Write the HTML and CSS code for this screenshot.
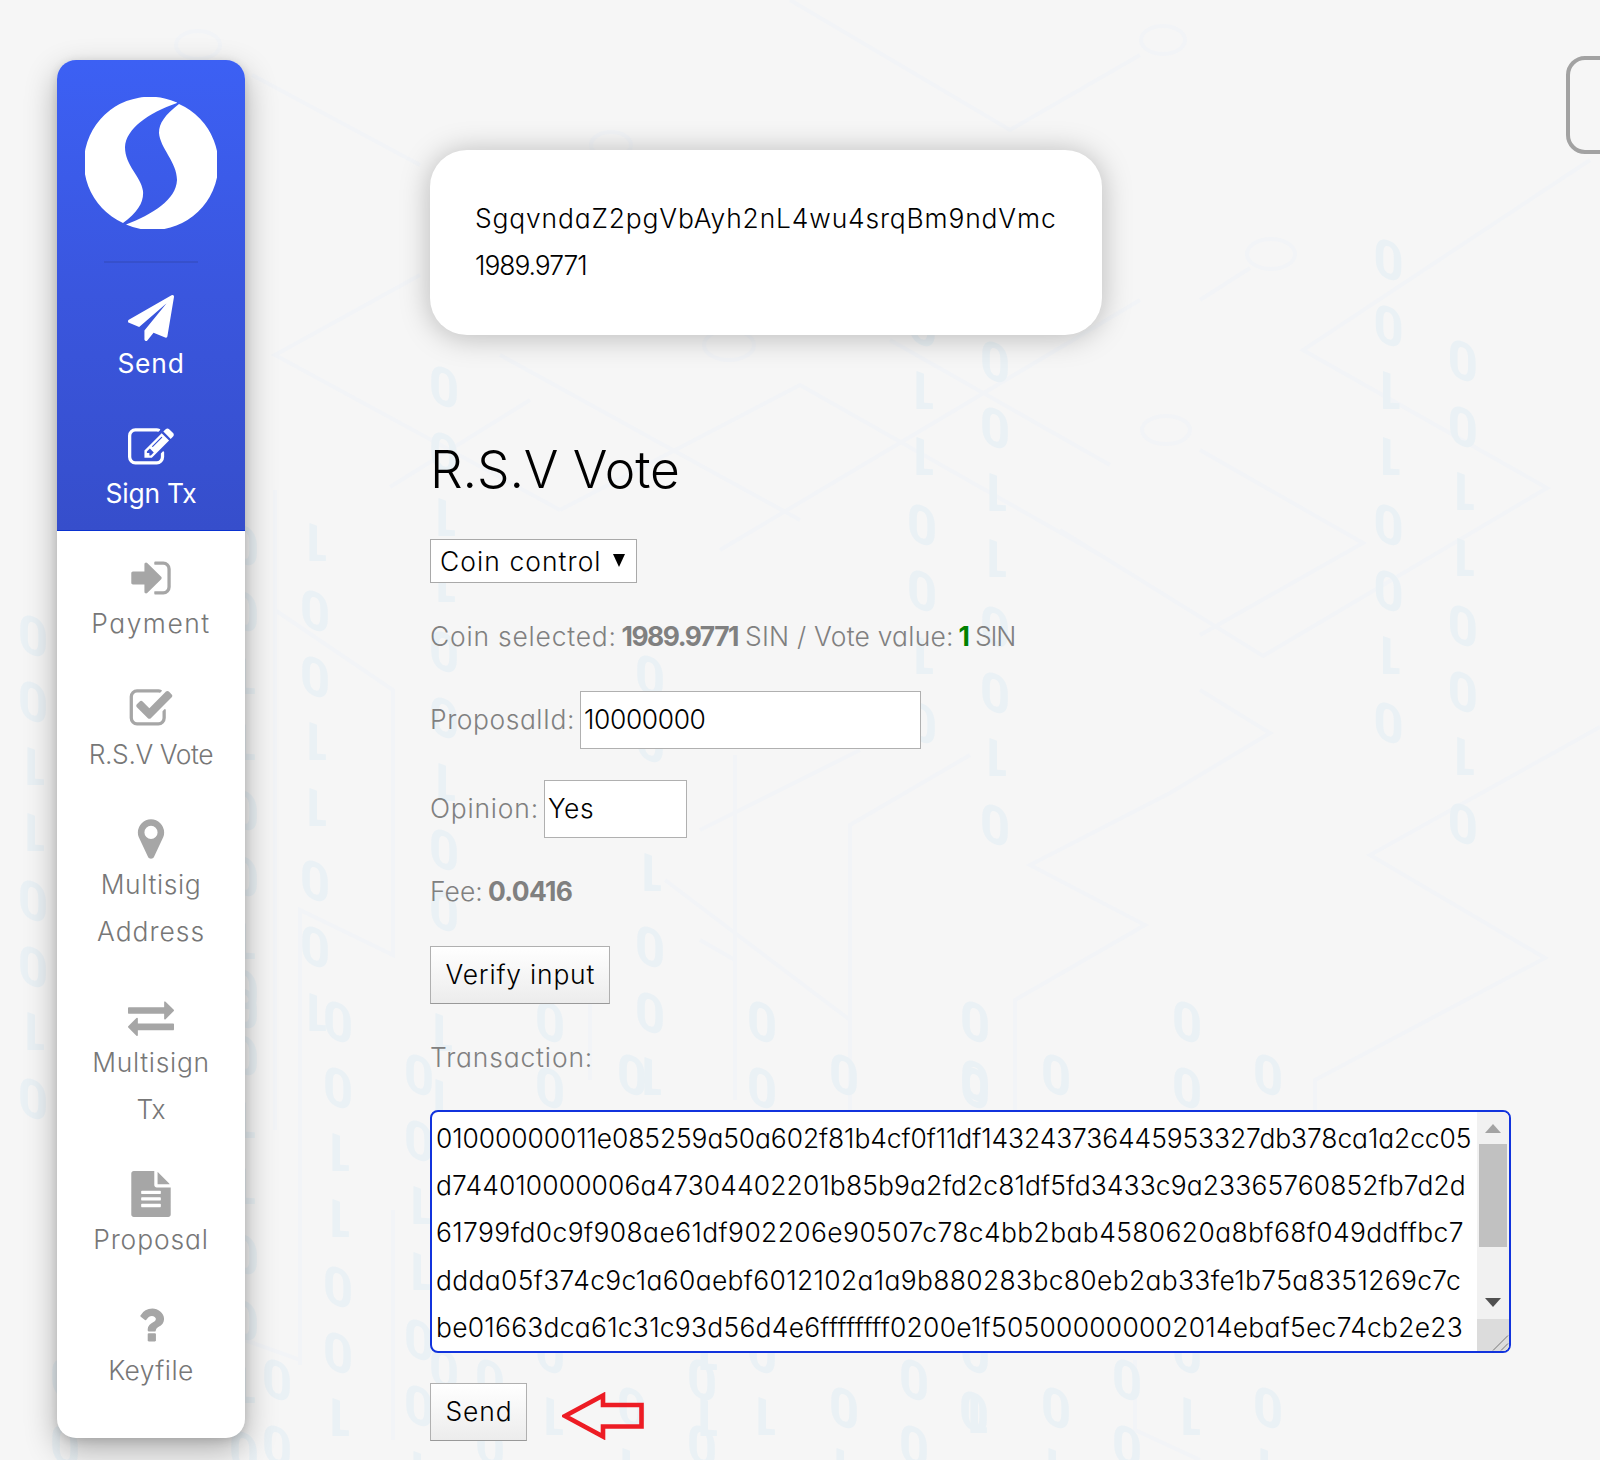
FILE: index.html
```html
<!DOCTYPE html>
<html lang="en">
<head>
<meta charset="utf-8">
<title>R.S.V Vote</title>
<link rel="stylesheet" href="styles.css">
</head>
<body>
<svg class="backdrop" viewBox="0 0 1600 1460" aria-hidden="true">
  <defs>
    <text id="d0" class="digit" text-anchor="middle" transform="skewY(20) rotate(180)" y="18">0</text>
    <text id="d1" class="digit" text-anchor="middle" transform="skewY(20) rotate(180)" y="18">1</text>
    <g id="pair"><use href="#d0"/><use href="#d0" y="66"/></g>
    <g id="ones"><use href="#d1"/><use href="#d1" y="66"/></g>
    <g id="col">
      <use href="#pair"/><use href="#ones" y="132"/><use href="#pair" y="265"/><use href="#d1" y="397"/><use href="#d0" y="463"/>
    </g>
  </defs>
  <g class="circuit">
    <path d="M1590 160 1303 350 1547 488 1263 656 1060 530M1200 300 1250 268M1200 450 1363 543 1200 635M1200 690 1270 733 1170 793 1030 865 1145 925 1015 1000V1180M1600 727 1370 855 1545 958 1315 1080V1110M790 0 1010 130 1140 55M252 75 420 165M420 275 275 355 560 510M560 510 800 385 1100 555M500 355 800 520M890 340 1110 465M1140 300 720 550M390 487 530 400M700 830 860 750M850 1180V825L970 755M735 1100V755M665 880 850 1020M590 1080V950M700 940 735 960M275 490V1130M275 610 393 690V955L300 910V1365M245 1340 300 1360V1100M393 1210V1440M1135 1360V1430L1200 1460"/>
    <ellipse cx="1271" cy="254" rx="24" ry="15"/><ellipse cx="1163" cy="40" rx="22" ry="14"/><ellipse cx="1166" cy="430" rx="24" ry="14"/><ellipse cx="729" cy="345" rx="25" ry="15"/><ellipse cx="611" cy="145" rx="20" ry="13"/><ellipse cx="198" cy="45" rx="22" ry="14"/>
  </g>
  <g class="digits">
    <use href="#col" x="1388.5" y="259"/><use href="#col" x="1462.7" y="360"/>
    <use href="#col" x="33" y="635"/><use href="#col" x="995" y="361"/>
    <use href="#col" x="922" y="259"/><use href="#col" x="444" y="386"/>
    <use href="#d1" x="315" y="543"/><use href="#pair" x="315" y="610"/><use href="#ones" x="315" y="742"/><use href="#pair" x="315" y="880"/><use href="#d1" x="315" y="1013"/>
    <use href="#col" x="338" y="1021"/>
    <use href="#col" x="244" y="544"/><use href="#col" x="244" y="988"/>
    <use href="#col" x="419" y="1074"/>
    <use href="#pair" x="277" y="1379"/><use href="#pair" x="65" y="1379"/>
    <use href="#d0" x="444" y="910"/><use href="#ones" x="441" y="1033"/>
    <use href="#pair" x="650" y="675"/><use href="#ones" x="650" y="807"/><use href="#pair" x="650" y="946"/><use href="#d1" x="650" y="1077"/>
    <use href="#pair" x="550" y="1021"/><use href="#d0" x="632" y="1074"/>
    <use href="#pair" x="762" y="1021"/><use href="#d0" x="844" y="1074"/>
    <use href="#pair" x="975" y="1021"/><use href="#d0" x="975" y="1080"/><use href="#d0" x="1056" y="1074"/>
    <use href="#pair" x="1187" y="1021"/><use href="#d0" x="1268" y="1074"/>
    <use href="#d0" x="444" y="1368"/><use href="#pair" x="490" y="1379"/><use href="#d0" x="550" y="1352"/><use href="#d1" x="552" y="1417"/>
    <use href="#d0" x="632" y="1407"/><use href="#pair" x="702" y="1379"/><use href="#ones" x="706" y="1352"/>
    <use href="#d0" x="762" y="1352"/><use href="#d1" x="764" y="1417"/><use href="#d0" x="844" y="1407"/><use href="#pair" x="914" y="1379"/>
    <use href="#d0" x="975" y="1352"/><use href="#d0" x="974" y="1411"/><use href="#d1" x="976" y="1415"/>
    <use href="#d0" x="1056" y="1407"/><use href="#pair" x="1127" y="1379"/><use href="#d0" x="1187" y="1352"/><use href="#d1" x="1189" y="1417"/><use href="#d0" x="1268" y="1407"/>
    <use href="#d1" x="628" y="1468"/><use href="#d1" x="842" y="1468"/><use href="#d1" x="1054" y="1468"/><use href="#d1" x="1266" y="1468"/>
  </g>
</svg>

<aside class="sidebar">
  <div class="brand">
    <svg class="logo" viewBox="0 0 132 132"><path d="M92 5.500A65.500 65.500 0 0 0 38 126C53 115 59 105 58 94C56 79 40 69 40 50C41 32 63 16 92 6zM94 7C80 18 74 26 74 36C75 51 92 65 92 83C91 103 68 117 41 127.500A65.500 65.500 0 0 0 94 7z"/></svg>
    <hr class="rule">
    <a class="item"><svg class="icon" viewBox="0 0 1792 1792"><path d="M1764 11q33 24 27 64l-256 1536q-5 29-32 45-14 8-31 8-11 0-24-5l-453-185-242 295q-18 23-49 23-13 0-22-4-19-7-30.500-23.500t-11.500-36.500v-349l864-1059-1069 925-395-162q-37-14-40-55-2-40 32-59l1664-960q15-9 32-9 20 0 36 11z"/></svg><span class="t-send">Send</span></a>
    <a class="item"><svg class="icon" viewBox="0 0 1792 1792"><path d="M888 1184l116-116-152-152-116 116v56h96v96h56zm440-720q-16-16-33 1l-350 350q-17 17-1 33t33-1l350-350q17-17 1-33zm80 594v190q0 119-84.500 203.500t-203.500 84.500h-832q-119 0-203.500-84.500t-84.500-203.500v-832q0-119 84.500-203.500t203.500-84.500h832q63 0 117 25 15 7 18 23 3 17-9 29l-49 49q-14 14-32 8-23-6-45-6h-832q-66 0-113 47t-47 113v832q0 66 47 113t113 47h832q66 0 113-47t47-113v-126q0-13 9-22l64-64q15-15 35-7t20 29zm-96-738l288 288-672 672h-288v-288zm444 132l-92 92-288-288 92-92q28-28 68-28t68 28l152 152q28 28 28 68t-28 68z"/></svg><span class="t-sign">Sign Tx</span></a>
  </div>
  <nav class="nav">
    <a class="item"><svg class="icon" viewBox="0 0 1792 1792"><path d="M1312 896q0 26-19 45l-544 544q-19 19-45 19t-45-19-19-45v-288h-448q-26 0-45-19t-19-45v-384q0-26 19-45t45-19h448v-288q0-26 19-45t45-19 45 19l544 544q19 19 19 45zm352-352v704q0 119-84.500 203.500t-203.500 84.500h-320q-13 0-22.500-9.500t-9.500-22.500q0-4-1-20t-.5-26.500 3-23.500 10-19.500 20.500-6.500h320q66 0 113-47t47-113v-704q0-66-47-113t-113-47h-312l-11.500-1-11.500-3-8-5.500-7-9-2-13.500q0-4-1-20t-.5-26.500 3-23.500 10-19.500 20.500-6.500h320q119 0 203.500 84.500t84.500 203.500z"/></svg><span class="t-pay">Payment</span></a>
    <a class="item"><svg class="icon" viewBox="0 0 1792 1792"><path d="M1472 930v318q0 119-84.500 203.500t-203.500 84.500h-832q-119 0-203.500-84.500t-84.500-203.500v-832q0-119 84.500-203.500t203.500-84.500h832q63 0 117 25 15 7 18 23 3 17-9 29l-49 49q-10 10-23 10-3 0-9-2-23-6-45-6h-832q-66 0-113 47t-47 113v832q0 66 47 113t113 47h832q66 0 113-47t47-113v-254q0-13 9-22l64-64q10-10 23-10 6 0 12 3 20 8 20 29zm231-489l-814 814q-24 24-57 24t-57-24l-430-430q-24-24-24-57t24-57l110-110q24-24 57-24t57 24l263 263 647-647q24-24 57-24t57 24l110 110q24 24 24 57t-24 57z"/></svg><span class="t-vote">R.S.V Vote</span></a>
    <a class="item"><svg class="icon" viewBox="0 0 1792 1792"><path d="M1152 640q0-106-75-181t-181-75-181 75-75 181 75 181 181 75 181-75 75-181zm256 0q0 109-33 179l-364 774q-16 33-47.500 52t-67.500 19-67.500-19-46.500-52l-365-774q-33-70-33-179 0-212 150-362t362-150 362 150 150 362z"/></svg><span class="t-msig">Multisig</span><span class="t-addr">Address</span></a>
    <a class="item"><svg class="icon" viewBox="0 0 1792 1792"><path d="M1792 1184v192q0 13-9.500 22.500t-22.500 9.500h-1376v192q0 13-9.500 22.500t-22.500 9.500q-12 0-24-10l-319-320q-9-9-9-22 0-14 9-23l320-320q9-9 23-9 13 0 22.500 9.500t9.500 22.500v192h1376q13 0 22.500 9.500t9.500 22.500zm0-544q0 14-9 23l-320 320q-9 9-23 9-13 0-22.500-9.500t-9.500-22.500v-192h-1376q-13 0-22.500-9.500t-9.500-22.500v-192q0-13 9.500-22.500t22.500-9.500h1376v-192q0-14 9-23t23-9q12 0 24 10l319 319q9 9 9 23z"/></svg><span class="t-msign">Multisign</span><span class="t-tx">Tx</span></a>
    <a class="item"><svg class="icon" viewBox="0 0 1792 1792"><path d="M1596 476q14 14 28 36h-472v-472q22 14 36 28zm-476 164h544v1056q0 40-28 68t-68 28h-1344q-40 0-68-28t-28-68v-1600q0-40 28-68t68-28h800v544q0 40 28 68t68 28zm160 736v-64q0-14-9-23t-23-9h-704q-14 0-23 9t-9 23v64q0 14 9 23t23 9h704q14 0 23-9t9-23zm0-256v-64q0-14-9-23t-23-9h-704q-14 0-23 9t-9 23v64q0 14 9 23t23 9h704q14 0 23-9t9-23zm0-256v-64q0-14-9-23t-23-9h-704q-14 0-23 9t-9 23v64q0 14 9 23t23 9h704q14 0 23-9t9-23z"/></svg><span class="t-prop">Proposal</span></a>
    <a class="item"><svg class="icon" viewBox="0 0 1792 1792"><path d="M1088 1256v240q0 16-12 28t-28 12h-240q-16 0-28-12t-12-28v-240q0-16 12-28t28-12h240q16 0 28 12t12 28zm316-600q0 54-15.500 101t-35 76.500-55 59.500-57.500 43.500-61 35.500q-41 23-68.500 65t-27.500 67q0 17-12 32.500t-28 15.500h-240q-15 0-25.500-18.500t-10.500-37.500v-45q0-83 65-156.500t143-108.500q59-27 84-56t25-76q0-42-46.500-74t-107.500-32q-65 0-108 29-35 25-107 115-13 16-31 16-12 0-25-8l-164-125q-13-10-15.500-25t5.500-28q160-266 464-266 80 0 161 31t146 83 106 127.500 41 158.500z"/></svg><span class="t-key">Keyfile</span></a>
  </nav>
</aside>

<main class="main">
  <section class="wallet">
    <div class="t-wallet">SgqvndaZ2pgVbAyh2nL4wu4srqBm9ndVmc</div>
    <div class="t-balance">1989.9771</div>
  </section>
  <h1 class="title">R.S.V Vote</h1>
  <div class="select"><span class="t-coin">Coin control</span><svg class="caret" viewBox="0 0 12 13"><path d="M0 0H12L6 13z"/></svg></div>
  <p class="line"><span class="t-selected">Coin selected:</span><b class="amount">1989.9771</b><span class="t-value">SIN / Vote value:</span><b class="vote">1</b><span class="t-sin">SIN</span></p>
  <div class="field proposal"><span class="t-pid">ProposalId:</span><div class="input t-id">10000000</div></div>
  <div class="field opinion"><span class="t-opinion">Opinion:</span><div class="input t-yes">Yes</div></div>
  <p class="line"><span class="t-fee">Fee:</span><b class="fee">0.0416</b></p>
  <button class="button verify">Verify input</button>
  <p class="line"><span class="t-trans">Transaction:</span></p>
  <div class="textarea">
    <div class="hex">
      <div class="h1">01000000011e085259a50a602f81b4cf0f11df143243736445953327db378ca1a2cc05</div>
      <div class="h2">d744010000006a47304402201b85b9a2fd2c81df5fd3433c9a23365760852fb7d2d</div>
      <div class="h3">61799fd0c9f908ae61df902206e90507c78c4bb2bab4580620a8bf68f049ddffbc7</div>
      <div class="h4">ddda05f374c9c1a60aebf6012102a1a9b880283bc80eb2ab33fe1b75a8351269c7c</div>
      <div class="h5">be01663dca61c31c93d56d4e6ffffffff0200e1f505000000002014ebaf5ec74cb2e23</div>
    </div>
    <div class="scroll">
      <svg class="up" viewBox="0 0 16 9"><path d="M0 9 8 0 16 9z"/></svg>
      <div class="thumb"></div>
      <svg class="down" viewBox="0 0 16 9"><path d="M0 0H16L8 9z"/></svg>
      <svg class="grip" viewBox="0 0 32 32"><path d="M16 31 31 16M24 31 31 24"/></svg>
    </div>
  </div>
  <div class="actions">
    <button class="button send">Send</button>
    <svg class="arrow" viewBox="0 0 82 48"><path d="M3 24 41 3.500V13H79.500V34.500H41V44.500z"/></svg>
  </div>
</main>
<div class="panel"></div>
</body>
</html>
```
FILE: styles.css
```css
* { box-sizing: border-box; }
body {
  margin: 0; width: 1600px; height: 1460px; overflow: hidden; position: relative;
  display: flex; align-items: flex-start; background: #f6f6f6; color: #000;
  font: 340 26.4px/47.2px Inter, "Open Sans", sans-serif;
  font-feature-settings: "cv11"; white-space: nowrap;
}
svg { display: block; }
p, h1 { margin: 0; }
b { font-weight: 700; }

.backdrop { position: absolute; left: 0; top: 0; width: 1600px; height: 1460px; z-index: -1; }
.digit { font: bold 53px Roboto, sans-serif; }
.digits { fill: #eaf1f5; }
.circuit { fill: none; stroke: #f2f4f7; stroke-width: 4; }

.sidebar {
  width: 188px; height: 1378px; margin: 60px 0 0 57px; border-radius: 19px; overflow: hidden;
  background: #fff; color: #777; text-align: center;
  box-shadow: 0 12px 32px rgba(0,0,0,.3), 0 2px 10px rgba(0,0,0,.12);
}
.brand {
  height: 471px; padding-top: 37px; color: #fff; font-weight: 430;
  background: linear-gradient(#3c60f4, #3a56de 50%, #364ecb); border-bottom: 1px solid #0a32d0;
}
.logo { width: 132px; height: 132px; margin: 0 auto; fill: #fff; }
.rule { width: 94px; height: 2px; margin: 31.500px auto 32px; border: 0; background: #3650cc; }
.item { display: flex; flex-direction: column; align-items: center; margin-bottom: 38.200px; }
.icon { width: 46px; height: 46px; fill: currentColor; margin-bottom: -1px; }
.nav { padding-top: 24.300px; }
.nav .icon { fill: #a6a6a6; }

.main { margin: 150px 0 0 185px; width: 1081px; color: #808080; display: flex; flex-direction: column; align-items: flex-start; }
.wallet {
  width: 672px; height: 185px; padding: 45px 0 0 45px; border-radius: 37px; background: #fff; color: #000;
  box-shadow: 0 2px 30px rgba(0,0,0,.26);
}
.title { margin-top: 103.500px; font-size: 51.500px; font-weight: 350; line-height: 60px; color: #000; letter-spacing: -.002em; }
.select {
  margin-top: 40.500px; width: 207px; height: 44px; border: 1px solid #a9a9a9; background: #fff; color: #000;
  display: flex; align-items: center; justify-content: space-between; padding: 1px 11px 0 9px;
}
.caret { width: 12px; height: 13px; margin-top: -3px; }
.line { margin-top: 30px; height: 47px; display: flex; }
.field { display: flex; align-items: center; height: 58px; margin-top: 31px; }
.opinion { margin-top: 31px; }
.input { height: 58px; line-height: 55px; border: 1px solid #b0b0b0; background: #fff; color: #000; padding-left: 3px; }
.proposal .input { width: 341px; }
.opinion .input { width: 143px; }
.button {
  height: 58px; margin: 31px 0 0; padding: 0 0 1px 14.500px; text-align: left; font: inherit; color: #000;
  border: 1px solid #b0b0b0; border-bottom-color: #999; background: linear-gradient(#fff, #ececec);
  font-feature-settings: inherit;
}
.verify { width: 180px; letter-spacing: .031em; }
.send { width: 97px; margin: 0; letter-spacing: .035em; }
.textarea {
  margin-top: 29px; width: 1081px; height: 243px; border: 2px solid #1133dd; border-radius: 8px; background: #fff;
  display: flex; justify-content: space-between; overflow: hidden; color: #000;
}
.hex { padding: 3px 0 0 4px; }
.scroll { width: 32px; background: #f1f1f1; display: flex; flex-direction: column; align-items: center; }
.scroll > * { flex: none; }
.up { width: 16px; height: 9px; margin: 12px 0 11px; fill: #a3a3a3; }
.thumb { width: 28px; height: 103px; background: #c1c1c1; }
.down { width: 16px; height: 9px; margin-top: 51px; fill: #505050; }
.grip { width: 32px; height: 33px; margin-top: 12px; background: #dcdcdc; stroke: #777; fill: none; }
.actions { display: flex; margin-top: 30px; }
.arrow { width: 82px; height: 48px; margin: 9px 0 0 35px; fill: none; stroke: #ed1c24; stroke-width: 4.600; stroke-linejoin: miter; }
.panel { position: absolute; left: 1566px; top: 56px; width: 80px; height: 98px; border: 4px solid #a2a2a2; border-radius: 19px; }

.t-send { letter-spacing: .03em; }
.t-sign { letter-spacing: -.006em; }
.t-pay { letter-spacing: .058em; }
.t-vote { letter-spacing: -.015em; }
.t-msig { letter-spacing: .023em; }
.t-addr { letter-spacing: .038em; }
.t-msign { letter-spacing: .027em; }
.t-tx { letter-spacing: 0; }
.t-prop { letter-spacing: .034em; }
.t-key { letter-spacing: .017em; }
.t-wallet { letter-spacing: .0325em; }
.t-balance { letter-spacing: -.038em; }
.t-coin { letter-spacing: .041em; }
.t-selected { letter-spacing: .031em; width: 191.500px; }
.amount { letter-spacing: -.056em; width: 123.500px; }
.t-value { letter-spacing: .009em; width: 213.500px; }
.vote { color: green; width: 16.500px; }
.t-sin { letter-spacing: -.045em; }
.t-pid { letter-spacing: .022em; width: 150px; }
.t-id { letter-spacing: -.014em; }
.t-opinion { letter-spacing: .031em; width: 114px; }
.t-yes { letter-spacing: .02em; }
.t-fee { letter-spacing: .002em; width: 58px; }
.fee { letter-spacing: -.025em; }
.t-trans { letter-spacing: .033em; }
.h1 { letter-spacing: -.0027em; }
.h2 { letter-spacing: .0053em; }
.h3 { letter-spacing: .0160em; }
.h4 { letter-spacing: .0140em; }
.h5 { letter-spacing: .0108em; }
```
